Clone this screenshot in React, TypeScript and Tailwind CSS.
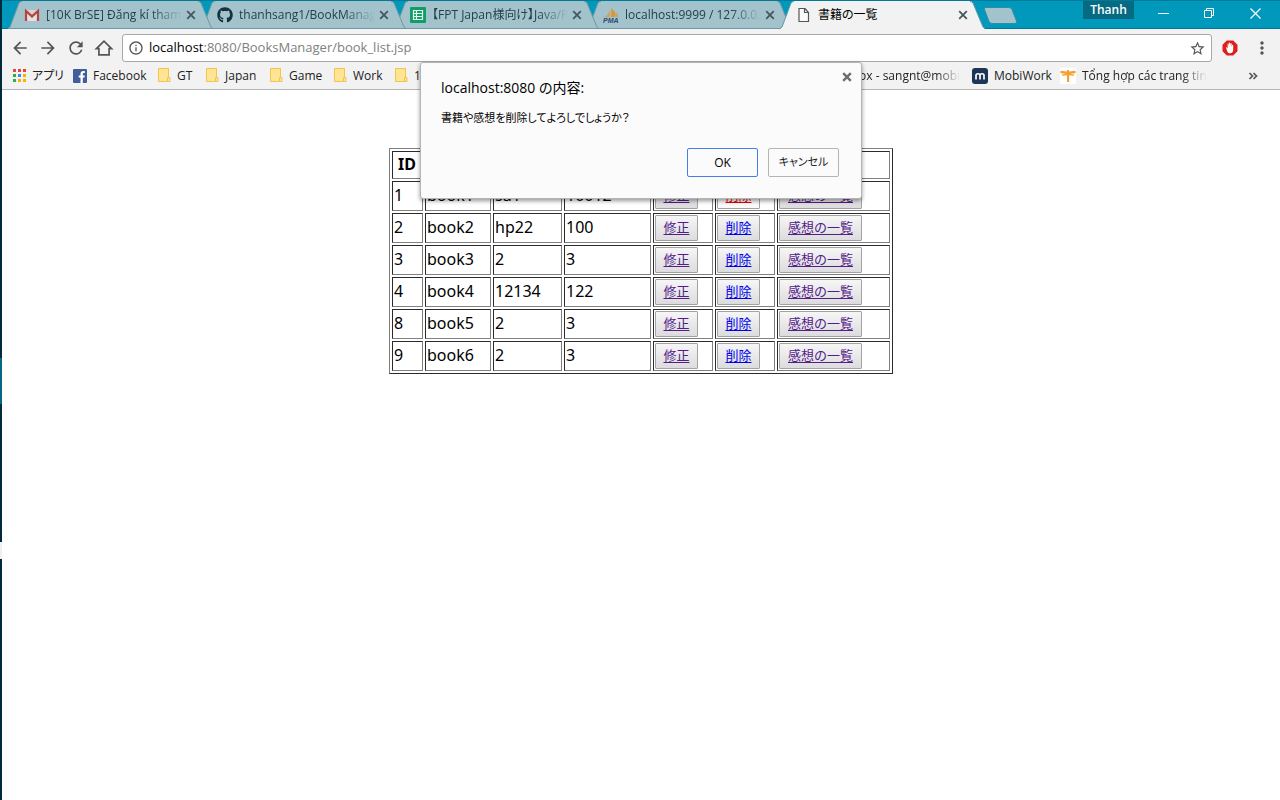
import React from "react";
import {
  MdArrowBack,
  MdArrowForward,
  MdRefresh,
  MdInfoOutline,
  MdStarBorder,
  MdMoreVert,
} from "react-icons/md";
import { FaGithub } from "react-icons/fa";

function GmailIcon() {
  return (
    <svg width="16" height="16" viewBox="0 0 16 16" aria-hidden="true">
      <path d="M1 3h14v11H1z" fill="#d9d3d5" />
      <path d="M3.2 14V6L8 10l4.800-4v8" fill="#e4e0e2" />
      <path d="M2 14V4l6 5.400L14 4v10" fill="none" stroke="#b5433f" strokeWidth="2.200" />
    </svg>
  );
}

function SheetsIcon() {
  return (
    <svg width="16" height="16" viewBox="0 0 16 16" aria-hidden="true">
      <rect width="16" height="16" rx="1" fill="#0f9d68" />
      <path d="M3.500 3.500h9v9h-9zM3.500 6.500h9M3.500 9.500h9M6.500 3.500v9" fill="none" stroke="#e6f3ee" strokeWidth="1.200" />
    </svg>
  );
}

function SailIcon() {
  return (
    <svg width="16" height="16" viewBox="0 0 16 16" aria-hidden="true">
      <path d="M7.500 1.500C7 5 5 8 1.500 10H7z" fill="#c9a35c" />
      <path d="M8.500 1C12 4 13 7 12.500 10H8z" fill="#d9963a" />
      <path d="M12.500 5c2 1.500 2.800 3 2.500 5h-2z" fill="#c9a35c" />
      <text x="0" y="15.500" fontSize="7" fontWeight="700" fontStyle="italic" fontFamily="Liberation Sans, sans-serif" fill="#2d4a6e">
        PMA
      </text>
    </svg>
  );
}

function PageIcon() {
  return (
    <svg width="16" height="16" viewBox="0 0 16 16" aria-hidden="true">
      <path d="M3 1.500h6l3.500 4v9H3zM8.500 1.500v4h4" fill="#fafafa" stroke="#555" strokeWidth="1.200" />
    </svg>
  );
}

function CloseIcon({ weight = "1.800" }: { weight?: string }) {
  return (
    <svg width="12" height="12" viewBox="0 0 12 12" aria-hidden="true">
      <path d="M2.200 2.200l7.600 7.600M9.800 2.200L2.200 9.800" fill="none" stroke="currentColor" strokeWidth={weight} />
    </svg>
  );
}

function HomeIcon() {
  return (
    <svg width="20" height="20" viewBox="0 0 20 20" aria-hidden="true">
      <path d="M2.400 10.700 10 3.100l7.600 7.600h-2.500v6.200H4.900v-6.200z" fill="none" stroke="currentColor" strokeWidth="1.700" />
    </svg>
  );
}

function AppsIcon() {
  const colors = ["#e8453c", "#e8453c", "#e8453c", "#34a853", "#4285f4", "#f5b400", "#34a853", "#f5b400", "#f5b400"];
  return (
    <svg width="13" height="13" viewBox="0 0 13 13" aria-hidden="true">
      {colors.map((c, i) => (
        <rect key={i} x={(i % 3) * 5} y={Math.floor(i / 3) * 5} width="3" height="3" fill={c} />
      ))}
    </svg>
  );
}

function FacebookIcon() {
  return (
    <svg width="14" height="14" viewBox="0 0 14 14" aria-hidden="true">
      <rect width="14" height="14" rx="1" fill="#415e9b" />
      <path d="M7.500 14V8.600H5.700V6.500h1.800V5c0-1.900 1.100-2.900 2.800-2.900h1.500v2h-1c-.8 0-1 .4-1 1v1.400h2l-.3 2.100H9.800V14z" fill="#fff" />
    </svg>
  );
}

function FolderIcon() {
  return (
    <svg width="13" height="15" viewBox="0 0 13 15" aria-hidden="true">
      <path d="M.5.5h10v13H.5z" fill="#ffe493" stroke="#eec54e" />
      <path d="M9.500 9.500h2.500v4H9.500z" fill="#ffe493" stroke="#eec54e" />
    </svg>
  );
}

function MobiIcon() {
  return (
    <svg width="16" height="16" viewBox="0 0 16 16" aria-hidden="true">
      <rect width="16" height="16" rx="3" fill="#1d3557" />
      <path d="M4 11.500V7.300C4 5.500 8 5 8 7.400v4.100M8 7.400C8 5 12 5.500 12 7.300v4.200" fill="none" stroke="#fff" strokeWidth="1.700" />
    </svg>
  );
}

function DragonflyIcon() {
  return (
    <svg width="16" height="16" viewBox="0 0 16 16" aria-hidden="true">
      <rect width="16" height="16" fill="#fff" />
      <path d="M.5 2.800 7 3.600V2h2v1.600l6.500-.8v2.400L10 5.800l4 .7v1.300L9.200 7.200V14H7V7.200L2 7.800V6.500l4-.7-5.500-.6z" fill="#f3a02c" />
    </svg>
  );
}

function BlockerIcon() {
  return (
    <svg width="16" height="16" viewBox="0 0 16 16" aria-hidden="true">
      <path d="M4.800.5h6.400l4.300 4.300v6.400l-4.300 4.300H4.800L.5 11.200V4.800z" fill="#dd1f1f" />
      <path
        d="M4 7.200c.7-.3 1.200.5 1.600 1.200V4.200c0-.8 1-.8 1.100 0L7 6.500V3.200c0-.8 1.200-.8 1.200 0v3.300l.3-2.700c.1-.8 1.200-.7 1.200.1v3l.4-1.700c.2-.7 1.100-.5 1.100.2v4.300c0 2-1 3.500-3.200 3.500-2.500 0-2.800-2-4-6z"
        fill="#fff"
      />
    </svg>
  );
}

type Tab = { title: string; icon: React.ReactNode; active?: boolean; layer: string };

const tabs: Tab[] = [
  { title: "[10K BrSE] Đăng kí tham", icon: <GmailIcon />, layer: "z-[4]" },
  { title: "thanhsang1/BookManag", icon: <FaGithub size={16} color="#16323c" />, layer: "z-[3]" },
  { title: "【FPT Japan様向け】Java/P", icon: <SheetsIcon />, layer: "z-[2]" },
  { title: "localhost:9999 / 127.0.0.1", icon: <SailIcon />, layer: "z-[1]" },
  { title: "書籍の一覧", icon: <PageIcon />, active: true, layer: "z-[5]" },
];

function BrowserTab({ tab }: { tab: Tab }) {
  return (
    <div className={`relative -mr-3 flex h-7 w-[205px] shrink-0 items-center pr-4 pl-4 ${tab.layer}`}>
      <svg className="absolute inset-0" width="205" height="28" viewBox="0 0 205 28" aria-hidden="true">
        <path d="M0 28 2 26 11 2Q12 0 14 0H190Q192 0 193 2L203 26 205 28z" fill={tab.active ? "#f2f2f2" : "#a3c3cc"} />
        <path
          d={tab.active ? "M0 27.500 2 26 11 2Q12 .5 14 .5M190 .5Q192 .5 193 2L203 26 205 27.500" : "M0 27.500 2 26 11 2Q12 .5 14 .5M190 .5Q192 .5 193 2L203 26 205 27.500H0"}
          fill="none"
          stroke={tab.active ? "#5d98a6" : "#6f98a4"}
        />
      </svg>
      <button className="relative flex min-w-0 flex-1 items-center gap-[6px] text-left">
        <span className="w-4 shrink-0">{tab.icon}</span>
        <span
          className={`w-[139px] overflow-hidden whitespace-nowrap text-[12px] leading-5 [font-feature-settings:'palt'] ${
            tab.active ? "text-black" : "text-[#243f48] [mask-image:linear-gradient(to_right,black_76%,transparent_98%)]"
          }`}
        >
          {tab.title}
        </span>
      </button>
      <button aria-label="タブを閉じる" className="relative text-[#47575c]">
        <CloseIcon />
      </button>
    </div>
  );
}

function Bookmark({ icon, label, width, fade }: { icon: React.ReactNode; label: string; width: string; fade?: boolean }) {
  return (
    <a href="#" className={`flex shrink-0 items-center gap-[6px] ${width}`}>
      <span className="shrink-0">{icon}</span>
      <span
        className={`whitespace-nowrap [font-feature-settings:'palt'] ${
          fade ? "[mask-image:linear-gradient(to_right,black_80%,transparent)]" : ""
        }`}
      >
        {label}
      </span>
    </a>
  );
}

const books = [
  ["1", "book1", "sa1", "10012"],
  ["2", "book2", "hp22", "100"],
  ["3", "book3", "2", "3"],
  ["4", "book4", "12134", "122"],
  ["8", "book5", "2", "3"],
  ["9", "book6", "2", "3"],
];

const cell = "border border-t-[#2b2b2b] border-l-[#2b2b2b] border-r-[#808080] border-b-[#808080]";
const textCell = "px-px pt-0 pb-[3px]";
const action =
  "block h-[26px] rounded-[1px] border border-[#a3a3a3] pb-[2px] text-center text-[13px] leading-5 underline underline-offset-2";

function BookTable() {
  return (
    <table className="w-[504px] table-fixed border-separate border-spacing-[2px] border border-t-[#808080] border-r-[#2b2b2b] border-b-[#2b2b2b] border-l-[#808080] text-[16px] leading-6">
      <colgroup>
        <col className="w-[31px]" />
        <col className="w-[66px]" />
        <col className="w-[69px]" />
        <col className="w-[87px]" />
        <col className="w-[60px]" />
        <col className="w-[60px]" />
        <col className="w-[113px]" />
      </colgroup>
      <thead>
        <tr className="h-7">
          <th className={`${cell} pr-px pb-[2px]`}>ID</th>
          {[1, 2, 3, 4, 5, 6].map((n) => (
            <th key={n} className={cell} />
          ))}
        </tr>
      </thead>
      <tbody>
        {books.map((row, i) => (
          <tr key={row[0]} className="h-[30px]">
            {row.map((value, j) => (
              <td key={j} className={`${cell} ${textCell}`}>
                {value}
              </td>
            ))}
            <td className={`${cell} p-px`}>
              <button className={`${action} w-[43px] bg-linear-to-b from-[#f6f6f6] to-[#dcdcdc] text-[#551a8b]`}>修正</button>
            </td>
            <td className={`${cell} p-px`}>
              <button
                className={`${action} w-[43px] bg-linear-to-b ${
                  i === 0 ? "from-[#f6f6f6] to-[#fafafa] text-[#ee0000]" : "from-[#f6f6f6] to-[#dcdcdc] text-[#0000ee]"
                }`}
              >
                削除
              </button>
            </td>
            <td className={`${cell} p-px`}>
              <button className={`${action} w-[83px] bg-linear-to-b from-[#f6f6f6] to-[#dcdcdc] text-[#551a8b]`}>感想の一覧</button>
            </td>
          </tr>
        ))}
      </tbody>
    </table>
  );
}

function ConfirmDialog() {
  return (
    <div
      role="dialog"
      aria-labelledby="dialog-title"
      className="absolute top-[62px] left-1/2 z-10 w-[442px] -translate-x-1/2 rounded-[3px] border border-[#b4b4b4] bg-[#fbfbfb] px-5 pt-[14px] pb-[21px] text-black shadow-[0_2px_4px_rgba(0,0,0,0.4)]"
    >
      <div className="flex items-start justify-between">
        <h1 id="dialog-title" className="text-[14px] leading-[22px] [font-feature-settings:'palt']">
          localhost:8080 の内容:
        </h1>
        <button aria-label="閉じる" className="-mt-[11px] -mr-[17px] p-[5px] text-[#6e6e6e]">
          <CloseIcon weight="2.400" />
        </button>
      </div>
      <p className="mt-2 text-[11px] leading-[22px] [font-feature-settings:'palt']">書籍や感想を削除してよろしでしょうか？</p>
      <div className="mt-[19px] flex justify-end gap-[10px] pr-[2px] text-[12px] [font-feature-settings:'palt']">
        <button className="h-[29px] w-[71px] rounded-[2px] border border-[#4080e8] font-medium">OK</button>
        <button className="h-[29px] w-[71px] rounded-[2px] border border-[#b4b4b4] text-[11px] text-[#222]">キャンセル</button>
      </div>
    </div>
  );
}

export default function App() {
  return (
    <div className="flex min-h-screen bg-white font-['Open_Sans','Noto_Sans_CJK_JP',sans-serif]">
      <aside className="flex w-[2px] shrink-0 flex-col bg-[#012a3a]">
        <div className="h-[358px]" />
        <div className="h-[46px] bg-[#026a85]" />
        <div className="h-[138px]" />
        <div className="h-[17px] bg-[#f0f0f0]" />
      </aside>
      <div className="relative flex min-w-0 flex-1 flex-col">
        <header>
          <div className="flex h-[29px] items-start border-t border-t-[#007a96] bg-[#0099bc] shadow-[inset_0_-1px_0_#007896]">
            <nav className="flex pl-[6px]" aria-label="タブ">
              {tabs.map((tab) => (
                <BrowserTab key={tab.title} tab={tab} />
              ))}
            </nav>
            <button aria-label="新しいタブ" className="mt-[6px] ml-[10px]">
              <svg width="35" height="17" viewBox="0 0 35 17" aria-hidden="true">
                <path d="M2.500.5H26Q28 .5 29 2.500L33.500 14Q34 16.500 32 16.500H9Q7 16.500 6 14.500L1.500 2.500Q1 .5 2.500.5z" fill="#a3c3cc" stroke="#2f8ea3" />
              </svg>
            </button>
            <div className="ml-auto flex items-start pr-[2px] text-white">
              <button className="mr-[6px] h-[18px] w-[51px] bg-[#056a82] pb-px text-[12px] leading-4 font-semibold">Thanh</button>
              <button aria-label="最小化" className="flex h-6 w-[46px] items-center justify-center">
                <svg width="11" height="11" viewBox="0 0 11 11"><path d="M0 5.500h11" stroke="#fff" /></svg>
              </button>
              <button aria-label="元に戻す" className="flex h-6 w-[46px] items-center justify-center">
                <svg width="11" height="11" viewBox="0 0 11 11"><path d="M.5 2.500h7v7h-7zM2.500 2.500v-2h7v7h-2" fill="none" stroke="#fff" /></svg>
              </button>
              <button aria-label="閉じる" className="flex h-6 w-[46px] items-center justify-center">
                <svg width="11" height="11" viewBox="0 0 11 11"><path d="M.5.5l10 10M10.500.5l-10 10" stroke="#fff" strokeWidth="1.200" /></svg>
              </button>
            </div>
          </div>
          <div className="flex h-[33px] items-end bg-[#f2f2f2] text-[#555]">
            <div className="flex h-7 items-center gap-2 pl-2">
              <button aria-label="戻る"><MdArrowBack size={20} /></button>
              <button aria-label="進む"><MdArrowForward size={20} /></button>
              <button aria-label="再読み込み"><MdRefresh size={20} /></button>
              <button aria-label="ホーム"><HomeIcon /></button>
            </div>
            <div className="ml-2 flex h-7 flex-1 items-center rounded-[3px] border border-[#a9a9a9] bg-white px-[5px]">
              <MdInfoOutline size={16} />
              <div className="relative ml-[5px] flex-1 pb-[2px] text-[13px] leading-5">
                <div aria-hidden="true" className="whitespace-nowrap text-[#808080]">
                  <span className="text-black">localhost</span>:8080/BooksManager/book_list.jsp
                </div>
                <input
                  aria-label="アドレス"
                  defaultValue="localhost:8080/BooksManager/book_list.jsp"
                  className="absolute inset-0 w-full bg-transparent text-transparent outline-none"
                />
              </div>
              <button aria-label="ブックマークに追加"><MdStarBorder size={17} /></button>
            </div>
            <div className="flex h-7 items-center gap-[14px] pr-2 pl-[10px]">
              <button aria-label="広告ブロック"><BlockerIcon /></button>
              <button aria-label="メニュー"><MdMoreVert size={20} /></button>
            </div>
          </div>
          <div className="flex h-7 items-center overflow-hidden border-b border-[#b5b5b5] bg-[#f2f2f2] pl-[11px] text-[12px] leading-5 text-[#222]">
            <Bookmark icon={<AppsIcon />} label="アプリ" width="w-[60px]" />
            <Bookmark icon={<FacebookIcon />} label="Facebook" width="w-[85px]" />
            <Bookmark icon={<FolderIcon />} label="GT" width="w-12" />
            <Bookmark icon={<FolderIcon />} label="Japan" width="w-16" />
            <Bookmark icon={<FolderIcon />} label="Game" width="w-16" />
            <Bookmark icon={<FolderIcon />} label="Work" width="w-[61px]" />
            <Bookmark icon={<FolderIcon />} label="1" width="w-[424px]" />
            <Bookmark icon={<GmailIcon />} label="Inbox - sangnt@mobi" width="w-[153px]" fade />
            <Bookmark icon={<MobiIcon />} label="MobiWork" width="w-[88px]" />
            <Bookmark icon={<DragonflyIcon />} label="Tổng hợp các trang tin" width="w-[137px]" fade />
            <button aria-label="その他のブックマーク" className="mr-[22px] ml-auto text-[#555]">
              <svg width="10" height="8" viewBox="0 0 10 8" aria-hidden="true">
                <path d="M1.500 1l3 3-3 3M5.500 1l3 3-3 3" fill="none" stroke="currentColor" strokeWidth="1.700" />
              </svg>
            </button>
          </div>
        </header>
        <main className="flex justify-center pt-[58px] font-['Noto_Sans','Noto_Sans_CJK_JP',sans-serif] text-black">
          <BookTable />
        </main>
        <ConfirmDialog />
      </div>
    </div>
  );
}
